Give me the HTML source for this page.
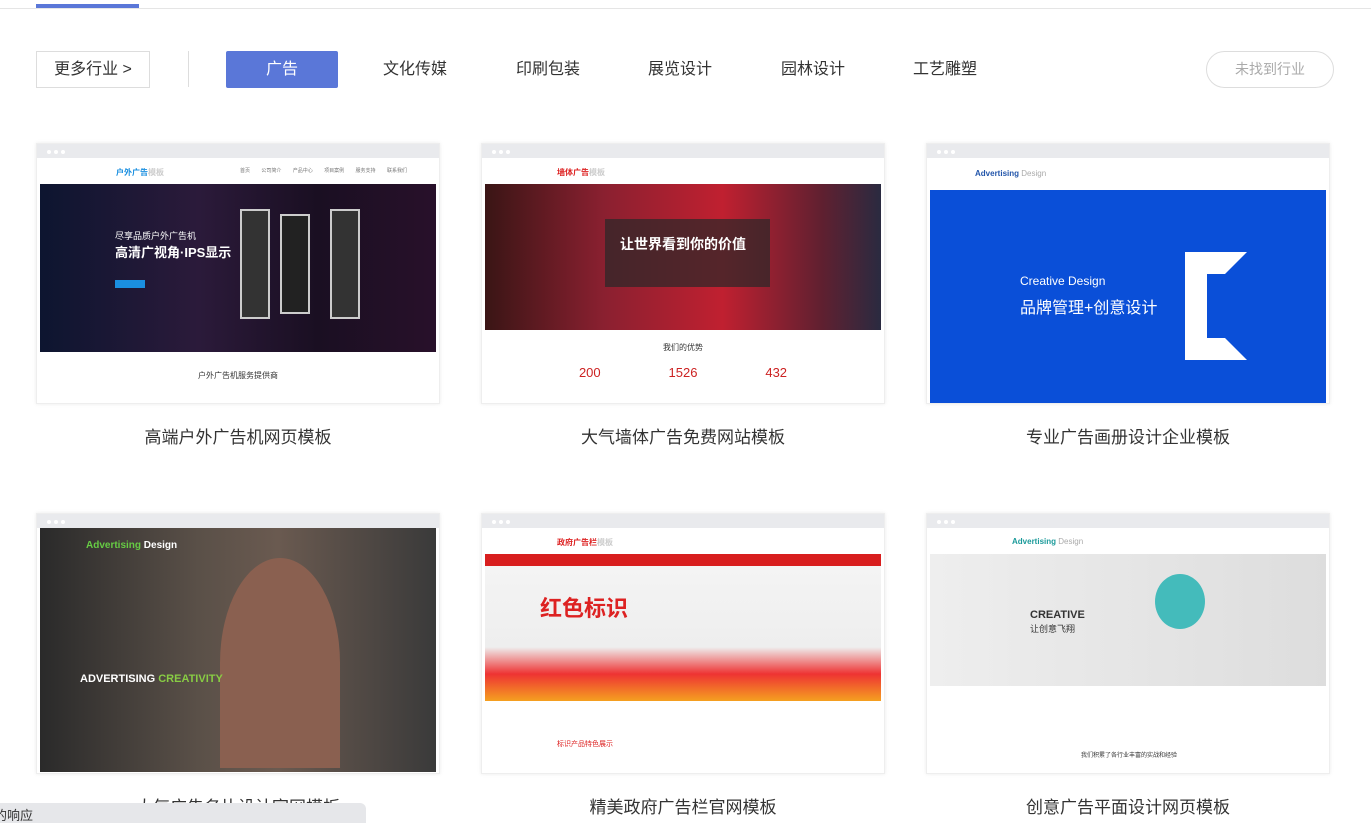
<!DOCTYPE html>
<html><head><meta charset="utf-8"><style>
*{margin:0;padding:0;box-sizing:border-box}
body{width:1371px;height:821px;overflow:hidden;background:#fff;font-family:"Liberation Sans","Noto Sans CJK SC",sans-serif;position:relative;color:#333}
.a{position:absolute}
.topline{left:0;top:8px;width:1371px;height:1px;background:#e5e5e5}
.topblue{left:36px;top:4px;width:103px;height:4px;background:#5a77d8}
.btn{top:51px;height:37px;font-size:16px;line-height:37px;text-align:center}
.card{width:404px;height:261px;border:1px solid #eee;box-shadow:0 0 4px rgba(0,0,0,.08);background:#fff;overflow:hidden}
.bar{height:14px;background:#e9eaed;position:relative}
.bar i{position:absolute;top:6px;width:4px;height:4px;border-radius:2px;background:#fff}
.in{position:absolute;left:3px;right:3px;top:14px;bottom:0;overflow:hidden}
.hd{height:26px;background:#fff;font-size:8px;position:relative}
.title{font-size:17px;text-align:center;width:404px;line-height:20px}
</style></head><body>
<div class="a topline"></div><div class="a topblue"></div>
<div class="a btn" style="left:36px;width:114px;border:1px solid #ddd;color:#333;line-height:35px">更多行业 &gt;</div>
<div class="a" style="left:188px;top:51px;width:1px;height:36px;background:#ddd"></div>
<div class="a btn" style="left:226px;width:112px;background:#5a77d8;color:#fff;border-radius:2px">广告</div>
<div class="a btn" style="left:370px;width:90px">文化传媒</div>
<div class="a btn" style="left:503px;width:90px">印刷包装</div>
<div class="a btn" style="left:635px;width:90px">展览设计</div>
<div class="a btn" style="left:768px;width:90px">园林设计</div>
<div class="a btn" style="left:900px;width:90px">工艺雕塑</div>
<div class="a btn" style="left:1206px;width:128px;border:1px solid #ddd;border-radius:19px;color:#aaa;font-size:14px;line-height:35px">未找到行业</div>

<!-- row 1 -->
<div class="a card" style="left:36px;top:143px"><div class="bar"><i style="left:10px"></i><i style="left:17px"></i><i style="left:24px"></i></div>
<div class="in"><div class="hd"><span class="a" style="left:76px;top:9px;color:#1a8fe0;font-weight:bold">户外广告<span style="color:#ccc">模板</span></span><span class="a" style="left:200px;top:9px;color:#777;font-size:5px;word-spacing:10px">首页 公司简介 产品中心 项目案例 服务支持 联系我们</span></div>
<div style="height:168px;background:linear-gradient(90deg,#0d1530,#2b1a3a 40%,#1a0f22 70%,#28102a);position:relative">
<div class="a" style="left:75px;top:45px;color:#fff;font-size:9px">尽享品质户外广告机</div>
<div class="a" style="left:75px;top:58px;color:#fff;font-size:13px;font-weight:bold">高清广视角·IPS显示</div>
<div class="a" style="left:75px;top:96px;width:30px;height:8px;background:#1a8fe0"></div>
<div class="a" style="left:200px;top:25px;width:30px;height:110px;background:#333;border:2px solid #ccc"></div>
<div class="a" style="left:240px;top:30px;width:30px;height:100px;background:#222;border:2px solid #ccc"></div>
<div class="a" style="left:290px;top:25px;width:30px;height:110px;background:#333;border:2px solid #ccc"></div></div>
<div style="text-align:center;font-size:8px;color:#333;padding-top:18px">户外广告机服务提供商</div></div></div>
<div class="a title" style="left:36px;top:428px">高端户外广告机网页模板</div>

<div class="a card" style="left:481px;top:143px"><div class="bar"><i style="left:10px"></i><i style="left:17px"></i><i style="left:24px"></i></div>
<div class="in"><div class="hd"><span class="a" style="left:72px;top:9px;color:#d22;font-weight:bold">墙体广告<span style="color:#ccc">模板</span></span></div>
<div style="height:146px;background:linear-gradient(90deg,#3a1515,#8a2030 30%,#c02030 60%,#602030 85%,#2a2a40);position:relative">
<div class="a" style="left:120px;top:35px;width:165px;height:68px;background:rgba(40,40,40,.7)"></div>
<div class="a" style="left:135px;top:50px;color:#fff;font-size:14px;font-weight:bold">让世界看到你的价值</div></div>
<div style="text-align:center;font-size:8px;padding-top:12px">我们的优势</div>
<div style="display:flex;justify-content:space-around;color:#c22;font-size:13px;padding:12px 60px 0">200<span>1526</span><span>432</span></div></div></div>
<div class="a title" style="left:481px;top:428px">大气墙体广告免费网站模板</div>

<div class="a card" style="left:926px;top:143px"><div class="bar"><i style="left:10px"></i><i style="left:17px"></i><i style="left:24px"></i></div>
<div class="in"><div class="hd" style="height:32px"><span class="a" style="left:45px;top:11px;color:#2255aa;font-weight:bold">Advertising <span style="color:#aaa;font-weight:normal">Design</span></span></div>
<div style="height:213px;background:#0a4fd8;position:relative">
<div class="a" style="left:90px;top:84px;color:#fff;font-size:12px">Creative Design</div>
<div class="a" style="left:90px;top:104px;color:#fff;font-size:16px">品牌管理+创意设计</div>
<div class="a" style="left:255px;top:62px;width:62px;height:108px;border:22px solid #fff;border-right-color:transparent"></div></div></div></div>
<div class="a title" style="left:926px;top:428px">专业广告画册设计企业模板</div>

<!-- row 2 -->
<div class="a card" style="left:36px;top:513px"><div class="bar"><i style="left:10px"></i><i style="left:17px"></i><i style="left:24px"></i></div>
<div class="in"><div style="height:244px;background:linear-gradient(90deg,#2a2a2a,#5a5048 40%,#6a5a50 60%,#3a3a3a);position:relative">
<div class="a" style="left:46px;top:12px;color:#6c4;font-size:10px;font-weight:bold">Advertising <span style="color:#fff">Design</span></div>
<div class="a" style="left:180px;top:30px;width:120px;height:210px;border-radius:50% 50% 0 0;background:#8a6050"></div>
<div class="a" style="left:40px;top:145px;color:#fff;font-size:11px;font-weight:bold">ADVERTISING <span style="color:#8c4">CREATIVITY</span></div></div></div></div>
<div class="a title" style="left:36px;top:798px">大气广告名片设计官网模板</div>

<div class="a card" style="left:481px;top:513px"><div class="bar"><i style="left:10px"></i><i style="left:17px"></i><i style="left:24px"></i></div>
<div class="in"><div class="hd" style="height:26px"><span class="a" style="left:72px;top:9px;color:#d22;font-weight:bold">政府广告栏<span style="color:#ccc">模板</span></span></div>
<div style="height:12px;background:#d81e1e"></div>
<div style="height:135px;background:linear-gradient(180deg,#f4f4f4,#eee 60%,#e33 80%,#f5a020);position:relative">
<div class="a" style="left:55px;top:25px;color:#d22;font-size:22px;font-weight:bold">红色标识</div></div>
<div style="height:71px;background:#fff;position:relative"><div class="a" style="left:72px;top:38px;color:#d22;font-size:7px">标识产品特色展示</div></div></div></div>
<div class="a title" style="left:481px;top:798px">精美政府广告栏官网模板</div>

<div class="a card" style="left:926px;top:513px"><div class="bar"><i style="left:10px"></i><i style="left:17px"></i><i style="left:24px"></i></div>
<div class="in"><div class="hd" style="height:26px"><span class="a" style="left:82px;top:9px;color:#1a9a9a;font-weight:bold">Advertising <span style="color:#aaa;font-weight:normal">Design</span></span></div>
<div style="height:132px;background:linear-gradient(90deg,#eee,#ddd);position:relative">
<div class="a" style="left:100px;top:55px;font-size:11px;font-weight:bold">CREATIVE</div>
<div class="a" style="left:100px;top:68px;font-size:9px">让创意飞翔</div>
<div class="a" style="left:225px;top:20px;width:50px;height:55px;border-radius:50%;background:#4bb"></div></div>
<div style="height:86px;background:#fff;position:relative"><div class="a" style="left:0;top:64px;width:398px;text-align:center;font-size:6px">我们积累了各行业丰富的实战和经验</div></div></div></div>
<div class="a title" style="left:926px;top:798px">创意广告平面设计网页模板</div>

<div class="a" style="left:0;top:803px;width:366px;height:20px;background:#e6e7ea;border-radius:0 6px 0 0;font-size:13px;line-height:26px;color:#333;text-indent:-6px">的响应</div>
</body></html>
